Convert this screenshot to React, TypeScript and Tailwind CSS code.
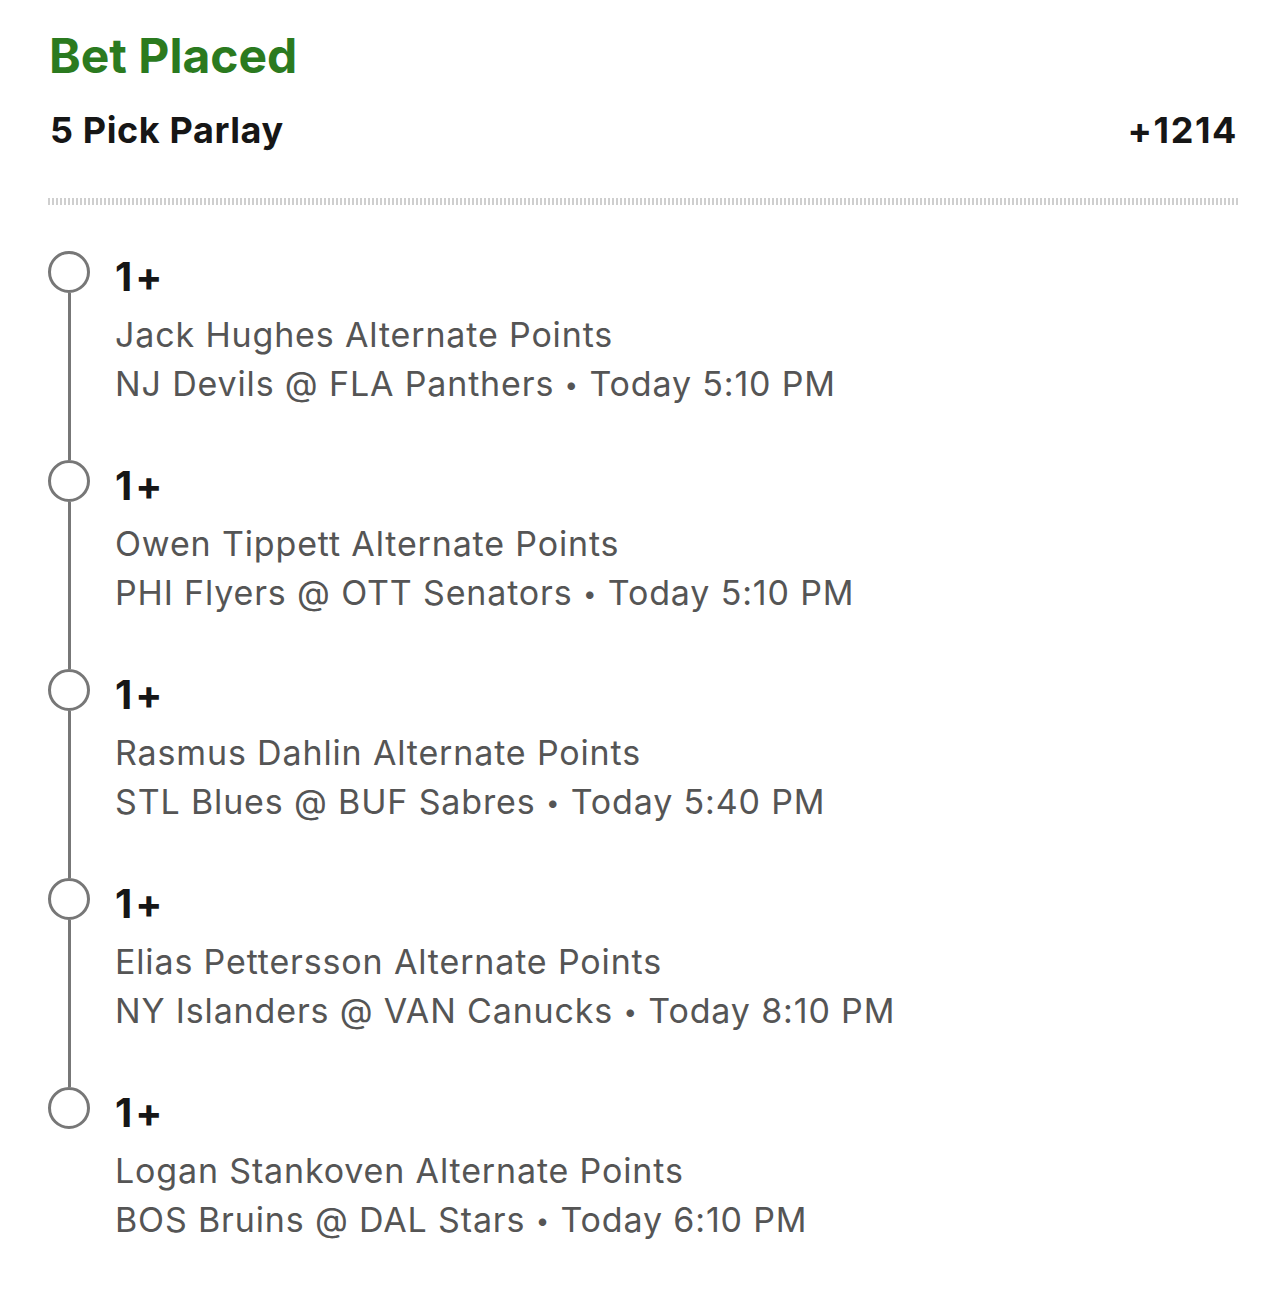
import React from "react";

const picks = [
  { name: "Jack Hughes Alternate Points", game: "NJ Devils @ FLA Panthers", time: "Today 5:10 PM" },
  { name: "Owen Tippett Alternate Points", game: "PHI Flyers @ OTT Senators", time: "Today 5:10 PM" },
  { name: "Rasmus Dahlin Alternate Points", game: "STL Blues @ BUF Sabres", time: "Today 5:40 PM" },
  { name: "Elias Pettersson Alternate Points", game: "NY Islanders @ VAN Canucks", time: "Today 8:10 PM" },
  { name: "Logan Stankoven Alternate Points", game: "BOS Bruins @ DAL Stars", time: "Today 6:10 PM" },
];

export default function App() {
  return (
    <div className="min-h-[1289px] w-[1284px] bg-white font-['Inter',sans-serif] pl-[48px] pr-[46px] pt-[27px]">
      <div className="text-[48px] leading-[58px] font-bold text-[#2b7a1f] pl-[1px]">Bet Placed</div>
      <div className="mt-[23px] flex items-center justify-between pl-[2px] text-[36px] leading-[44px] font-bold text-[#161616]">
        <span className="tracking-[0.6px]">5 Pick Parlay</span>
        <span className="tracking-[1.6px]">+1214</span>
      </div>
      <div className="mt-[46px] h-[7px] bg-[repeating-linear-gradient(90deg,#cfcfcf_0_2px,transparent_2px_4px)]" />
      <div className="mt-[46px]">
        {picks.map((p, i) => {
          const last = i === picks.length - 1;
          return (
            <div key={i} className={`flex ${last ? "" : "h-[209px]"}`}>
              <div className="flex w-[42px] flex-col items-center">
                <div className="h-[42px] w-[42px] shrink-0 rounded-full border-[3px] border-[#777777]" />
                {!last && <div className="w-[3px] flex-1 bg-[#777777]" />}
              </div>
              <div className="ml-[25px] pt-[3px] text-[#555555]">
                <div className="text-[40px] leading-[46px] font-bold tracking-[3px] text-[#161616]">1+</div>
                <div className="mt-[10px] text-[34px] leading-[49px] tracking-[0.85px]">{p.name}</div>
                <div className="text-[34px] leading-[49px] tracking-[0.85px]">
                  {p.game} <span className="relative top-[-3px] text-[24px]">•</span> {p.time}
                </div>
              </div>
            </div>
          );
        })}
      </div>
    </div>
  );
}
